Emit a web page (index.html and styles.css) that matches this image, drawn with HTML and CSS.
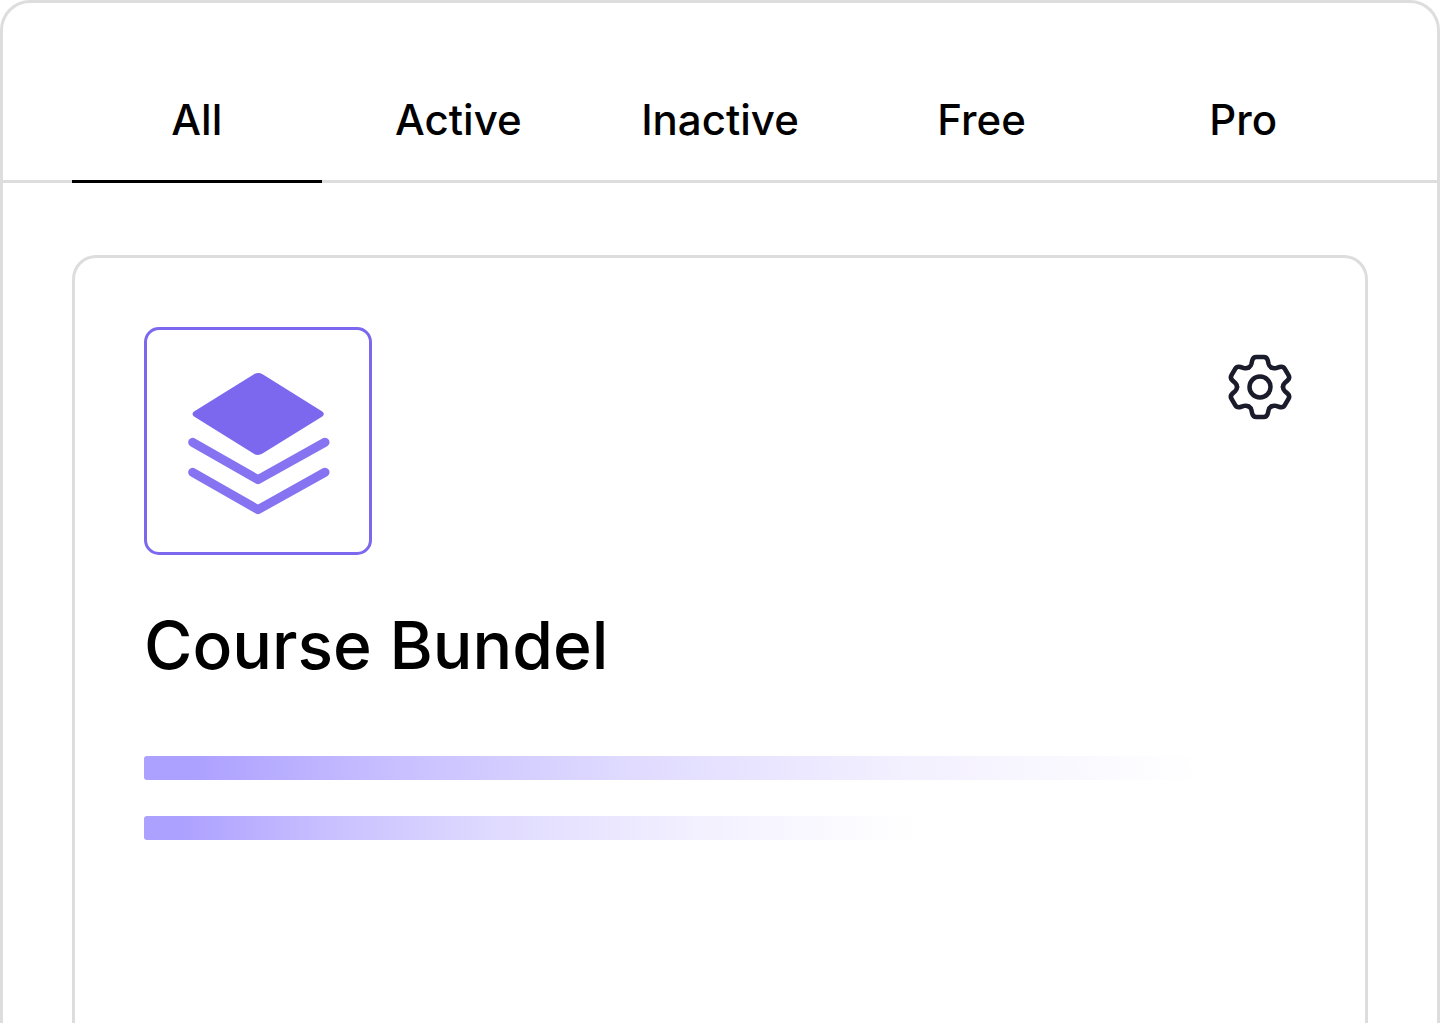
FILE: index.html
```html
<!DOCTYPE html>
<html lang="en">
<head>
    <meta charset="UTF-8">
    <meta name="viewport" content="width=device-width, initial-scale=1.0">
    <title>Course Bundel</title>

    <link rel="stylesheet" href="styles.css">
</head>
<body>
    <main class="panel">
        <nav class="tabs">
            <button type="button" class="tab active">All</button>
            <button type="button" class="tab">Active</button>
            <button type="button" class="tab">Inactive</button>
            <button type="button" class="tab">Free</button>
            <button type="button" class="tab">Pro</button>
        </nav>
        <section class="content">
            <article class="card">
                <div class="cardHeader">
                    <div class="cardIcon">
                        <svg viewBox="0 0 222 222" aria-hidden="true">
                            <path class="layerTop" d="M107 44.2Q111.3 41.8 115.6 44.2L175.3 81.6Q178.3 84 175.3 86.4L115.5 123.6Q111 126.4 106.5 123.6L47 86.4Q44 84 47 81.6Z"/>
                            <path class="layerLine" d="M45.7 112.3L111 149.6L178 112.3"/>
                            <path class="layerLine" d="M45.7 142.3L111 179.6L178 142.3"/>
                        </svg>
                    </div>
                    <button type="button" class="settings" aria-label="Settings">
                        <svg viewBox="-36 -36 72 72" aria-hidden="true">
                            <defs>
                                <path id="tooth" d="M-11.2 -19.4C-9.9 -20.2 -9 -21.5 -8.6 -23L-7.8 -26.5Q-7 -30 -3.6 -30L3.6 -30Q7 -30 7.8 -26.5L8.6 -23C9 -21.5 9.9 -20.2 11.2 -19.4"/>
                            </defs>
                            <circle r="10.5"/>
                            <use href="#tooth"/>
                            <use href="#tooth" transform="rotate(180)"/>
                            <g transform="scale(1.025 1)">
                                <use href="#tooth" transform="rotate(60)"/>
                                <use href="#tooth" transform="rotate(120)"/>
                                <use href="#tooth" transform="rotate(240)"/>
                                <use href="#tooth" transform="rotate(300)"/>
                            </g>
                        </svg>
                    </button>
                </div>
                <h1 class="cardTitle">Course Bundel</h1>
                <div class="lines">
                    <div class="line long"></div>
                    <div class="line short"></div>
                </div>
            </article>
        </section>
    </main>
</body>
</html>
```
FILE: styles.css
```css
*{
    margin: 0;
    padding: 0;
    box-sizing: border-box;
}
body{
    background-color: #fff;
    color: #000;
    font-family: Inter, sans-serif;
}
button{
    border: none;
    background: none;
    color: inherit;
    font-family: inherit;
    cursor: pointer;
}
svg{
    display: block;
    width: 100%;
    height: 100%;
}
.panel{
    min-height: 100vh;
    display: flex;
    flex-direction: column;
    border: 3px solid #ddd;
    border-bottom: none;
    border-radius: 30px 30px 0 0;
}
.tabs{
    display: grid;
    grid-template-columns: repeat(5, 1fr);
    gap: 12px;
    padding: 69px 69px 0;
    border-bottom: 3px solid #ddd;
}
.tab{
    margin-bottom: -3px;
    padding: 24px 0 36px;
    border-bottom: 3px solid transparent;
    font-size: 42px;
    font-weight: 500;
    line-height: 48px;
}
.tab.active{
    border-bottom-color: #000;
}
.content{
    flex: 1;
    display: flex;
    padding: 72px 69px 0;
}
.card{
    flex: 1;
    padding: 69px 69px 0;
    border: 3px solid #ddd;
    border-bottom: none;
    border-radius: 24px 24px 0 0;
}
.cardHeader{
    display: flex;
    justify-content: space-between;
    align-items: flex-start;
}
.cardIcon{
    width: 228px;
    height: 228px;
    border: 3px solid #7b68ee;
    border-radius: 15px;
}
.layerTop{
    fill: #7b68ee;
}
.layerLine{
    fill: none;
    stroke: #8673f1;
    stroke-width: 9;
    stroke-linecap: round;
    stroke-linejoin: round;
}
.settings{
    width: 72px;
    height: 72px;
    margin-top: 24px;
    fill: none;
    stroke: #1a1c2b;
    stroke-width: 4.5;
    stroke-linecap: round;
}
.cardTitle{
    margin-top: 48px;
    font-size: 66px;
    font-weight: 500;
    line-height: 84px;
}
.lines{
    display: flex;
    flex-direction: column;
    gap: 36px;
    margin-top: 69px;
}
.line{
    height: 24px;
    border-radius: 3px;
    background: linear-gradient(to right, #ada1ff 5%, #c8c0ff 24%, #e0dbff 46%, #f3f0ff 72%, #fff);
}
.line.long{
    width: 92%;
}
.line.short{
    width: 67%;
}
```
